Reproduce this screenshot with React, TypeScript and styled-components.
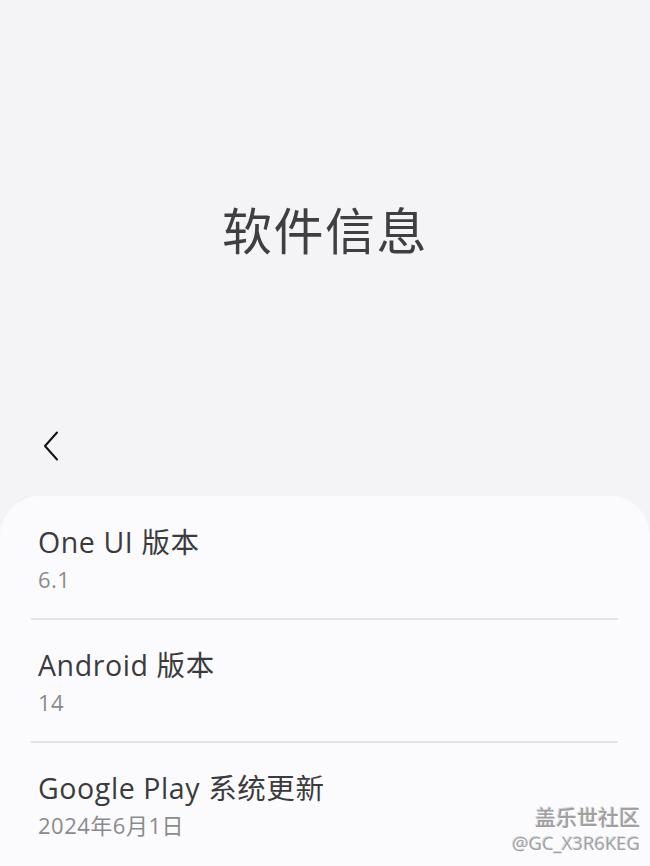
import React from "react";
import styled, { createGlobalStyle } from "styled-components";

const GlobalStyle = createGlobalStyle`
  html, body {
    margin: 0;
    padding: 0;
    background: #f4f4f6;
    font-family: "Open Sans", "Noto Sans CJK SC", sans-serif;
  }
`;

const Screen = styled.div`
  position: relative;
  width: 650px;
  height: 866px;
  overflow: hidden;
  background: #f4f4f6;
  display: flex;
  flex-direction: column;
`;

const Header = styled.div`
  height: 418px;
  padding-top: 193px;
  box-sizing: border-box;
  display: flex;
  justify-content: center;
`;

const PageTitle = styled.h1`
  margin: 0;
  font-family: "Noto Sans CJK SC", sans-serif;
  font-size: 50px;
  font-weight: 400;
  line-height: 70px;
  color: #3f3f41;
  letter-spacing: 1.5px;
`;

const Toolbar = styled.div`
  height: 56px;
  display: flex;
  align-items: center;
  padding-left: 36px;
`;

const BackButton = styled.button`
  width: 30px;
  height: 40px;
  border: none;
  background: none;
  padding: 0;
  display: flex;
  align-items: center;
  justify-content: center;
  color: #111;
`;

const Card = styled.div`
  margin-top: 22px;
  flex: 1;
  background: #fbfbfd;
  border-radius: 40px 40px 0 0;
  padding: 1px 32px 0 31px;
`;

const Item = styled.div<{ $last?: boolean }>`
  padding: 26px 0 24px 7px;
  border-bottom: ${(p) => (p.$last ? "none" : "2px solid #e4e4e6")};
`;

const ItemTitle = styled.div`
  font-size: 28.5px;
  line-height: 38px;
  letter-spacing: 0.6px;
  color: #3b3b3d;
`;

const ItemValue = styled.div`
  margin-top: 3px;
  font-size: 22px;
  line-height: 30px;
  letter-spacing: 0.5px;
  color: #8b8b8d;
`;

const Watermark = styled.div`
  position: absolute;
  right: 10px;
  bottom: 10px;
  text-align: right;
  color: #a0a0a2;
  text-shadow: 1px 1px 0 #ffffff, -1px -1px 0 #d8d8da;
`;

const WatermarkName = styled.div`
  font-family: "Noto Sans CJK SC", sans-serif;
  font-size: 21px;
  line-height: 28px;
  font-weight: 500;
`;

const WatermarkId = styled.div`
  font-size: 18.5px;
  line-height: 26px;
`;

const items = [
  { title: "One UI 版本", value: "6.1" },
  { title: "Android 版本", value: "14" },
  { title: "Google Play 系统更新", value: "2024年6月1日" },
];

const App: React.FC = () => {
  return (
    <>
      <GlobalStyle />
      <Screen>
        <Header>
          <PageTitle>软件信息</PageTitle>
        </Header>
        <Toolbar>
          <BackButton aria-label="返回">
            <svg width="18" height="30" viewBox="0 0 18 30" fill="none">
              <path
                d="M15 1.5 L3 15 L15 28.5"
                stroke="currentColor"
                strokeWidth="2"
                strokeLinecap="round"
                strokeLinejoin="round"
              />
            </svg>
          </BackButton>
        </Toolbar>
        <Card>
          {items.map((item, i) => (
            <Item key={item.title} $last={i === items.length - 1}>
              <ItemTitle>{item.title}</ItemTitle>
              <ItemValue>{item.value}</ItemValue>
            </Item>
          ))}
        </Card>
        <Watermark>
          <WatermarkName>盖乐世社区</WatermarkName>
          <WatermarkId>@GC_X3R6KEG</WatermarkId>
        </Watermark>
      </Screen>
    </>
  );
};

export default App;
